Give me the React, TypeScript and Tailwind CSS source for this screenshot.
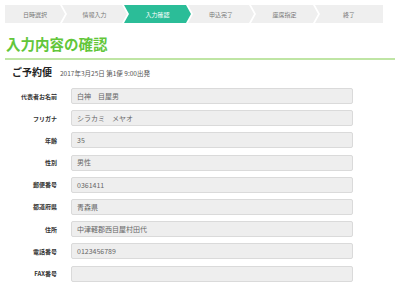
import React from "react";

const steps = [
  { label: "日時選択", w: "w-[60px]" },
  { label: "情報入力", w: "w-[65px]" },
  { label: "入力確認", w: "w-[67px]", active: true },
  { label: "申込完了", w: "w-[66px]" },
  { label: "座席指定", w: "w-[67px]" },
  { label: "終了", w: "w-[68px]" },
];

const rows = [
  { label: "代表者お名前", value: "白神　目屋男" },
  { label: "フリガナ", value: "シラカミ　メヤオ" },
  { label: "年齢", value: "35" },
  { label: "性別", value: "男性" },
  { label: "郵便番号", value: "0361411" },
  { label: "都道府県", value: "青森県" },
  { label: "住所", value: "中津軽郡西目屋村田代" },
  { label: "電話番号", value: "0123456789" },
  { label: "FAX番号", value: "" },
];

function clipFor(i: number, n: number) {
  const first = i === 0;
  const last = i === n - 1;
  const right = last
    ? "100% 0, 100% 100%, "
    : "calc(100% - 5px) 0, 100% 50%, calc(100% - 5px) 100%, ";
  const notch = first ? "0 100%" : "0 100%, 5px 50%";
  return `polygon(0 0, ${right}${notch})`;
}

export default function App() {
  return (
    <div
      className="w-[400px] h-[286px] overflow-hidden bg-white px-[5px] pt-[5px]"
      style={{ fontFamily: '"Noto Sans CJK JP", "Noto Sans", sans-serif' }}
    >
      {/* stepper */}
      <div className="flex h-[18px]">
        {steps.map((s, i) => (
          <div
            key={s.label}
            className={`${s.w} ${i > 0 ? "-ml-[3px]" : ""} flex items-center justify-center text-[6px] ${
              s.active ? "bg-[#2bbd98] text-white" : "bg-[#efefef] text-[#777]"
            }`}
            style={{ clipPath: clipFor(i, steps.length) }}
          >
            {s.label}
          </div>
        ))}
      </div>

      <div className="mt-[11px] border-b-2 border-[#bfe5a4] pb-[4px]">
        <h1 className="text-[14.5px] leading-[20px] font-bold text-[#62c63a] pl-[1px]">
          入力内容の確認
        </h1>
      </div>

      <div className="flex items-baseline mt-[5px] pl-[7px]">
        <span className="text-[10px] font-bold text-[#222] leading-[14px]">ご予約便</span>
        <span className="ml-[8px] text-[6.5px] text-[#555]">2017年3月25日 第1便 9:00出発</span>
      </div>

      <div className="mt-[9px] flex flex-col gap-[6.2px]">
        {rows.map((r) => (
          <div key={r.label} className="flex items-center">
            <div className="w-[52px] text-right text-[6px] font-bold text-[#333]">{r.label}</div>
            <div className="ml-[14px] w-[282px] h-[16px] bg-[#eeeeee] border border-[#dadada] rounded-[2px] flex items-center pl-[5px] text-[7px] text-[#666]">
              {r.value}
            </div>
          </div>
        ))}
      </div>
    </div>
  );
}
